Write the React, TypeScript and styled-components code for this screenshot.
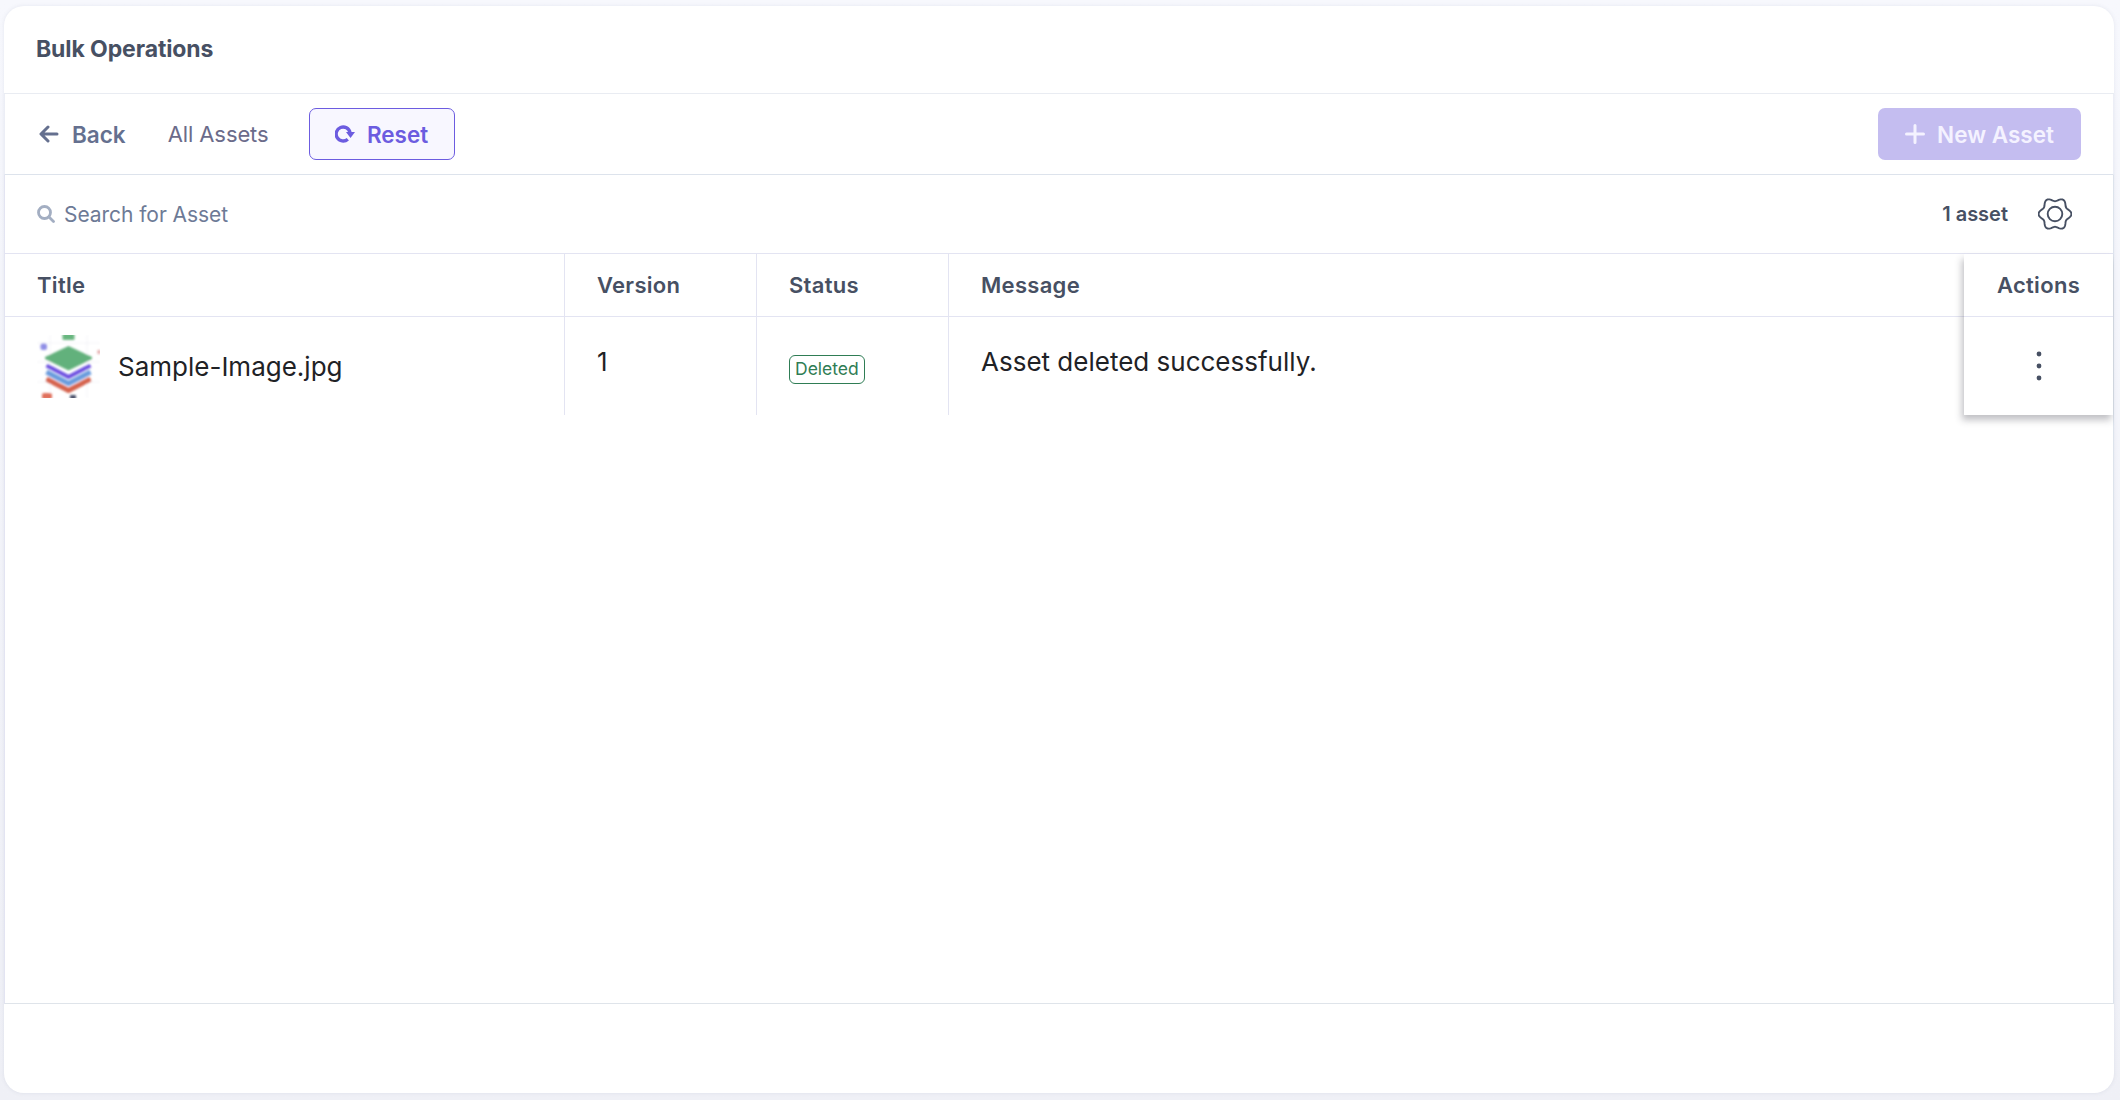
import React from "react";
import styled, { createGlobalStyle } from "styled-components";

const Global = createGlobalStyle`
  html, body { margin: 0; padding: 0; height: 100%; background: #f6f7fc; }
  #root { height: 100%; }
  * { box-sizing: border-box; }
  body { font-family: Inter, "Noto Sans", sans-serif; overflow: hidden; }
`;

const Page = styled.div`
  width: 2120px;
  height: 1100px;
  padding: 6px 6px 7px 4px;
  background: linear-gradient(180deg, #f7f8fd 0%, #eff0f6 100%);
`;
const Card = styled.main`
  height: 100%;
  background: #fff;
  border-radius: 20px;
  box-shadow: 0 0 4px rgba(100, 105, 140, 0.12);
  display: flex;
  flex-direction: column;
  overflow: hidden;
`;
const TitleBar = styled.header`
  height: 88px;
  flex: none;
  padding: 0 0 2px 32px;
  display: flex;
  align-items: center;
  border-bottom: 1px solid #e9ecf2;
`;
const Title = styled.h1`
  margin: 0;
  font-size: 23px;
  font-weight: 700;
  letter-spacing: -0.1px;
  color: #475063;
`;
const Toolbar = styled.div`
  height: 81px;
  flex: none;
  padding: 0 32px 0 34px;
  display: flex;
  align-items: center;
  border-bottom: 1px solid #dde3ec;
  border-left: 1px solid #eceef6;
  border-right: 1px solid #eceef6;
`;
const BackLink = styled.a`
  display: flex;
  align-items: center;
  gap: 13px;
  font-size: 22.5px;
  font-weight: 600;
  color: #65708f;
`;
const Crumb = styled.span`
  margin-left: 42px;
  font-size: 22px;
  letter-spacing: -0.1px;
  color: #6b6b8a;
`;
const ResetButton = styled.button`
  margin-left: 40px;
  width: 146px;
  height: 52px;
  display: flex;
  align-items: center;
  justify-content: center;
  gap: 12px;
  font: 600 22.5px Inter, sans-serif;
  color: #6c5ce0;
  background: #f8f7ff;
  border: 1.5px solid #6c5ce0;
  border-radius: 7px;
`;
const NewButton = styled.button`
  margin-left: auto;
  width: 203px;
  height: 52px;
  display: flex;
  align-items: center;
  justify-content: center;
  gap: 12px;
  font: 600 22.5px Inter, sans-serif;
  color: #f4f2ff;
  background: #c4bdf0;
  border: none;
  border-radius: 7px;
`;
const SearchBar = styled.div`
  height: 79px;
  flex: none;
  padding: 0 41px 0 32px;
  display: flex;
  align-items: center;
  border-bottom: 1px solid #e3e4f2;
  border-left: 1px solid #e3e4f2;
  border-right: 1px solid #dde3ec;
`;
const SearchText = styled.span`
  margin-left: 9px;
  font-size: 21px;
  letter-spacing: -0.05px;
  color: #6d7a96;
`;
const Count = styled.span`
  margin-left: auto;
  font-size: 20px;
  font-weight: 600;
  color: #475063;
`;
const GearSlot = styled.span`
  margin-left: 30px;
  display: flex;
`;
const TableArea = styled.section`
  flex: none;
  height: 750px;
  display: grid;
  grid-template-columns: 560px 192px 192px 1fr;
  grid-template-rows: 63px 98px;
  align-content: start;
  position: relative;
  border-bottom: 1.5px solid #dfe4ea;
  border-left: 1px solid #e3e4f2;
  border-right: 1px solid #dde3ec;
`;
const HeadCell = styled.div<{ $first?: boolean }>`
  display: flex;
  align-items: center;
  padding-left: 32px;
  font-size: 22px;
  font-weight: 600;
  color: #475063;
  letter-spacing: 0.3px;
  border-bottom: 1px solid #e3e4f2;
  border-right: ${(p) => (p.$first ? "1.5px solid #e3e4f2" : "none")};
`;
const BodyCell = styled.div<{ $first?: boolean }>`
  padding: 29px 0 0 32px;
  font-size: 26px;
  line-height: 32px;
  color: #1f2226;
  border-right: ${(p) => (p.$first ? "1.5px solid #e3e4f2" : "none")};
`;
const NameCell = styled(BodyCell)`
  display: flex;
  align-items: center;
  gap: 18px;
  padding: 0 0 0 32px;
  > span {
    padding-top: 2px;
  }
`;
const Thumb = styled.svg`
  width: 63px;
  height: 63px;
  flex: none;
`;
const Badge = styled.span`
  display: inline-block;
  margin-top: 9px;
  height: 29px;
  padding: 0 5px;
  font-size: 17.5px;
  line-height: 26px;
  color: #2f7d55;
  border: 1.5px solid #2f7d55;
  border-radius: 6px;
  vertical-align: top;
`;
const ActionsColumn = styled.div`
  position: absolute;
  top: 0;
  right: 0;
  width: 149px;
  height: 161px;
  background: #fff;
  box-shadow: -2px 5px 7px rgba(60, 60, 70, 0.32);
  display: grid;
  grid-template-rows: 63px 98px;
`;
const ActionsHead = styled.div`
  display: flex;
  align-items: center;
  justify-content: center;
  font-size: 22px;
  font-weight: 600;
  letter-spacing: 0.3px;
  color: #475063;
  border-bottom: 1px solid #e3e4f2;
`;
const ActionsBody = styled.div`
  display: flex;
  align-items: center;
  justify-content: center;
  color: #475063;
`;

const Thumbnail = () => (
  <Thumb viewBox="0 0 63 63">
    <defs>
      <filter id="soft" x="-5%" y="-5%" width="110%" height="110%">
        <feGaussianBlur stdDeviation="0.8" />
      </filter>
    </defs>
    <g filter="url(#soft)">
      <path d="M0 8h63M0 27h63M0 47h63M13 0v63M50 0v63" stroke="#f3f3f8" strokeWidth="1" />
      <rect x="25.500" y="-2" width="12" height="7" rx="1" fill="#68b67f" />
      <rect x="3.500" y="8.500" width="6.500" height="6.500" rx="2" fill="#8f8ee6" />
      <rect x="60.500" y="15" width="3" height="4" fill="#e3a9a9" />
      <path d="M9.500 44l22 11.500 22-11.500" fill="none" stroke="#d5634e" strokeWidth="4.800" strokeLinejoin="round" />
      <path d="M9.500 37l22 11.500 22-11.500" fill="none" stroke="#6a9bdd" strokeWidth="4.800" strokeLinejoin="round" />
      <path d="M9.500 30.500l22 11.500 22-11.500" fill="none" stroke="#6d4fe0" strokeWidth="3.800" strokeLinejoin="round" />
      <path d="M31.500 11L55 22 55 24 31.500 35.500 8 24 8 22z" fill="#62b17c" />
      <rect x="5" y="58" width="10" height="6.500" rx="2" fill="#e0705c" />
      <rect x="33" y="60" width="6" height="4.500" rx="1" fill="#4a5068" />
    </g>
  </Thumb>
);

const gearPoints = Array.from({ length: 121 }, (_, i) => {
  const t = (i / 120) * Math.PI * 2;
  const r = 14.6 + 1.8 * Math.cos(6 * t);
  return `${(17 + r * Math.cos(t)).toFixed(2)},${(17 + r * Math.sin(t)).toFixed(2)}`;
}).join(" ");

const Gear = () => (
  <svg width="34" height="34" viewBox="0 0 34 34" fill="none" stroke="#475063" strokeWidth="1.9">
    <circle cx="17" cy="17" r="7.300" />
    <polyline points={gearPoints} strokeLinejoin="round" />
  </svg>
);

export default function App() {
  return (
    <Page>
      <Global />
      <Card>
        <TitleBar>
          <Title>Bulk Operations</Title>
        </TitleBar>
        <Toolbar>
          <BackLink>
            <svg width="20" height="20" viewBox="0 0 20 20" fill="none" stroke="#65708f" strokeWidth="3" strokeLinecap="round" strokeLinejoin="round">
              <path d="M18 10H2.500M9 3l-7 7 7 7" />
            </svg>
            Back
          </BackLink>
          <Crumb>All Assets</Crumb>
          <ResetButton>
            <svg width="20" height="20" viewBox="0 0 20 20" fill="none">
              <path d="M12.800 15.200A7 7 0 1 1 15 8.500" stroke="#6c5ce0" strokeWidth="3.400" />
              <path d="M11 8h9l-4.500 6z" fill="#6c5ce0" />
            </svg>
            Reset
          </ResetButton>
          <NewButton>
            <svg width="20" height="20" viewBox="0 0 20 20" stroke="#f4f2ff" strokeWidth="3" strokeLinecap="round">
              <path d="M10 1.500v17M1.500 10h17" />
            </svg>
            New Asset
          </NewButton>
        </Toolbar>
        <SearchBar>
          <svg width="18" height="18" viewBox="0 0 18 18" fill="none" stroke="#a3aec2" strokeWidth="2.800" strokeLinecap="round">
            <circle cx="7.500" cy="7.500" r="6" />
            <path d="M12 12l4.500 4.500" />
          </svg>
          <SearchText>Search for Asset</SearchText>
          <Count>1 asset</Count>
          <GearSlot>
            <Gear />
          </GearSlot>
        </SearchBar>
        <TableArea>
          <HeadCell $first>Title</HeadCell>
          <HeadCell $first>Version</HeadCell>
          <HeadCell $first>Status</HeadCell>
          <HeadCell>Message</HeadCell>
          <NameCell $first>
            <Thumbnail />
            <span>Sample-Image.jpg</span>
          </NameCell>
          <BodyCell $first>1</BodyCell>
          <BodyCell $first>
            <Badge>Deleted</Badge>
          </BodyCell>
          <BodyCell>Asset deleted successfully.</BodyCell>
          <ActionsColumn>
            <ActionsHead>Actions</ActionsHead>
            <ActionsBody>
              <svg width="8" height="32" viewBox="0 0 8 32" fill="currentColor">
                <circle cx="4" cy="4" r="2.400" />
                <circle cx="4" cy="16" r="2.400" />
                <circle cx="4" cy="28" r="2.400" />
              </svg>
            </ActionsBody>
          </ActionsColumn>
        </TableArea>
      </Card>
    </Page>
  );
}
